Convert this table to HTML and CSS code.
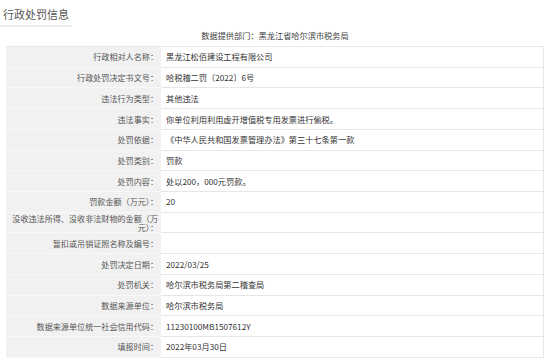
FILE: index.html
```html
<!DOCTYPE html>
<html lang="zh-CN">
<head>
<meta charset="utf-8">
<title>行政处罚信息</title>
<link rel="stylesheet" href="styles.css">
</head>
<body>
<div class="page">
  <div class="head"><h1 class="title">行政处罚信息</h1></div>
  <p class="source">数据提供部门：黑龙江省哈尔滨市税务局</p>
  <div class="table">
    <div class="row"><div class="label">行政相对人名称：</div><div class="value">黑龙江松佰建设工程有限公司</div></div>
    <div class="row"><div class="label">行政处罚决定书文号：</div><div class="value">哈税稽二罚〔2022〕6号</div></div>
    <div class="row"><div class="label">违法行为类型：</div><div class="value">其他违法</div></div>
    <div class="row"><div class="label">违法事实：</div><div class="value">你单位利用利用虚开增值税专用发票进行偷税。</div></div>
    <div class="row"><div class="label">处罚依据：</div><div class="value">《中华人民共和国发票管理办法》第三十七条第一款</div></div>
    <div class="row"><div class="label">处罚类别：</div><div class="value">罚款</div></div>
    <div class="row"><div class="label">处罚内容：</div><div class="value">处以200，000元罚款。</div></div>
    <div class="row"><div class="label">罚款金额（万元）：</div><div class="value">20</div></div>
    <div class="row"><div class="label">没收违法所得、没收非法财物的金额（万元）：</div><div class="value"></div></div>
    <div class="row"><div class="label">暂扣或吊销证照名称及编号：</div><div class="value"></div></div>
    <div class="row"><div class="label">处罚决定日期：</div><div class="value">2022/03/25</div></div>
    <div class="row"><div class="label">处罚机关：</div><div class="value">哈尔滨市税务局第二稽查局</div></div>
    <div class="row"><div class="label">数据来源单位：</div><div class="value">哈尔滨市税务局</div></div>
    <div class="row"><div class="label">数据来源单位统一社会信用代码：</div><div class="value">11230100MB1507612Y</div></div>
    <div class="row"><div class="label">填报时间：</div><div class="value">2022年03月30日</div></div>
  </div>
</div>
</body>
</html>
```

FILE: styles.css
```css
html, body {
  margin: 0;
  padding: 0;
  background: #ffffff;
}

body {
  font-family: "Noto Sans CJK SC", "Noto Sans", sans-serif;
  color: #444;
}

.page {
  width: 550px;
  height: 362px;
  overflow: hidden;
}

.head {
  height: 24px;
}

.title {
  display: inline-block;
  margin: 0;
  padding: 0 3px 0 3px;
  font-size: 11px;
  font-weight: normal;
  line-height: 22px;
  color: #555;
  border-bottom: 2px solid #ececec;
}

.source {
  margin: 0;
  height: 22px;
  line-height: 22px;
  font-size: 8.2px;
  text-align: center;
  color: #444;
}

.table {
  margin-left: 6px;
  width: 538px;
  border-top: 1px solid #e8e8e8;
  border-right: 1px solid #e6e6e6;
  box-sizing: border-box;
}

.row {
  display: flex;
  height: 20.73px;
}

.label {
  width: 155px;
  flex: none;
  box-sizing: border-box;
  padding: 0 3px 0 4px;
  background: #f1f1f1;
  border-bottom: 1px solid #f8f8f8;
  display: flex;
  align-items: center;
  justify-content: flex-end;
  text-align: right;
  font-size: 8.1px;
  line-height: 9px;
  color: #555;
}

.value {
  flex: 1;
  box-sizing: border-box;
  padding: 0 5px;
  border-bottom: 1px solid #e6e6e6;
  display: flex;
  align-items: center;
  font-size: 8.2px;
  line-height: 9px;
  color: #333;
}
```
